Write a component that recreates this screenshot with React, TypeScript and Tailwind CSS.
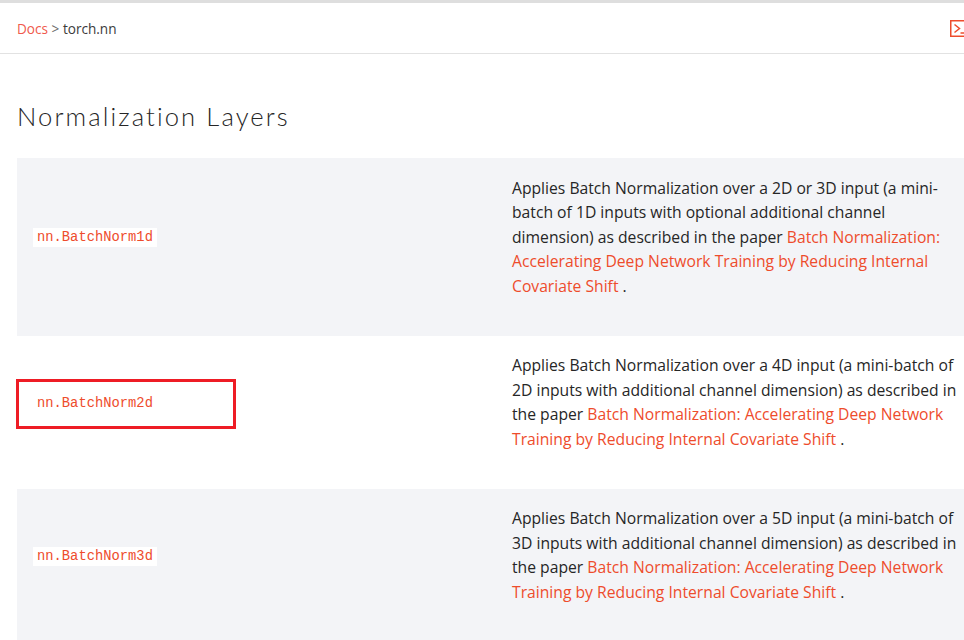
const rows = [
  {
    name: 'nn.BatchNorm1d',
    text: 'Applies Batch Normalization over a 2D or 3D input (a mini-batch of 1D inputs with optional additional channel dimension) as described in the paper ',
    gray: true,
  },
  {
    name: 'nn.BatchNorm2d',
    text: 'Applies Batch Normalization over a 4D input (a mini-batch of 2D inputs with additional channel dimension) as described in the paper ',
    gray: false,
    marked: true,
  },
  {
    name: 'nn.BatchNorm3d',
    text: 'Applies Batch Normalization over a 5D input (a mini-batch of 3D inputs with additional channel dimension) as described in the paper ',
    gray: true,
  },
];

function ShortcutIcon() {
  return (
    <svg width="14" height="17" viewBox="0 0 14 17" fill="none" stroke="#ee4c2c" className="block shrink-0">
      <rect x="0.75" y="0.75" width="20" height="15.5" strokeWidth="1.5" />
      <path d="M4.5 4.5 L9.5 8.5 L4.5 12.5" strokeWidth="1.5" />
      <path d="M10.5 13 H14" strokeWidth="1.5" />
    </svg>
  );
}

export default function App() {
  return (
    <div className="h-[640px] w-[964px] overflow-hidden bg-white font-['Open_Sans','Liberation_Sans',sans-serif] text-[#262626]">
      <div className="h-[3px] bg-[#dedede]" />
      <div className="flex h-[51px] items-center justify-between border-b border-[#e2e2e2] pl-[17px] pr-0">
        <div className="pt-[2px] text-[13.6px] text-[#6c6c6d]">
          <span className="text-[#f05a4c]">Docs</span> &gt; <span className="text-[#3c3c3c]">torch.nn</span>
        </div>
        <ShortcutIcon />
      </div>

      <div className="pl-[17px]">
        <h1 className="pt-[45px] pb-[25px] text-[25.6px] leading-[34px] font-light tracking-[2.1px] font-['Lato',sans-serif]">
          Normalization Layers
        </h1>

        <div className="w-[947px]">
          {rows.map(row => (
            <div key={row.name} className={`flex ${row.gray ? 'bg-[#f3f4f7]' : 'bg-white'}`}>
              <div className="flex w-[479px] shrink-0 items-center pt-[17px] pb-[38px] pl-[16px]">
                <span className="relative">
                  <code className="bg-white px-[4px] py-[2px] font-['Liberation_Mono',monospace] text-[13.8px] text-[#ee4c2c]">
                    {row.name}
                  </code>
                  {row.marked && (
                    <span className="absolute top-[-10px] left-[-17px] h-[50px] w-[220px] border-[3px] border-[#ee1c25]" />
                  )}
                </span>
              </div>
              <p className="flex-1 pt-[17.5px] pb-[37.5px] pl-[16px] pr-[3px] text-[15.7px] leading-[24.5px] text-[#262626]">
                {row.text}
                <span className="text-[#ee4c2c]">
                  Batch Normalization: Accelerating Deep Network Training by Reducing Internal Covariate Shift
                </span>{' '}
                .
              </p>
            </div>
          ))}
        </div>
      </div>
    </div>
  );
}
